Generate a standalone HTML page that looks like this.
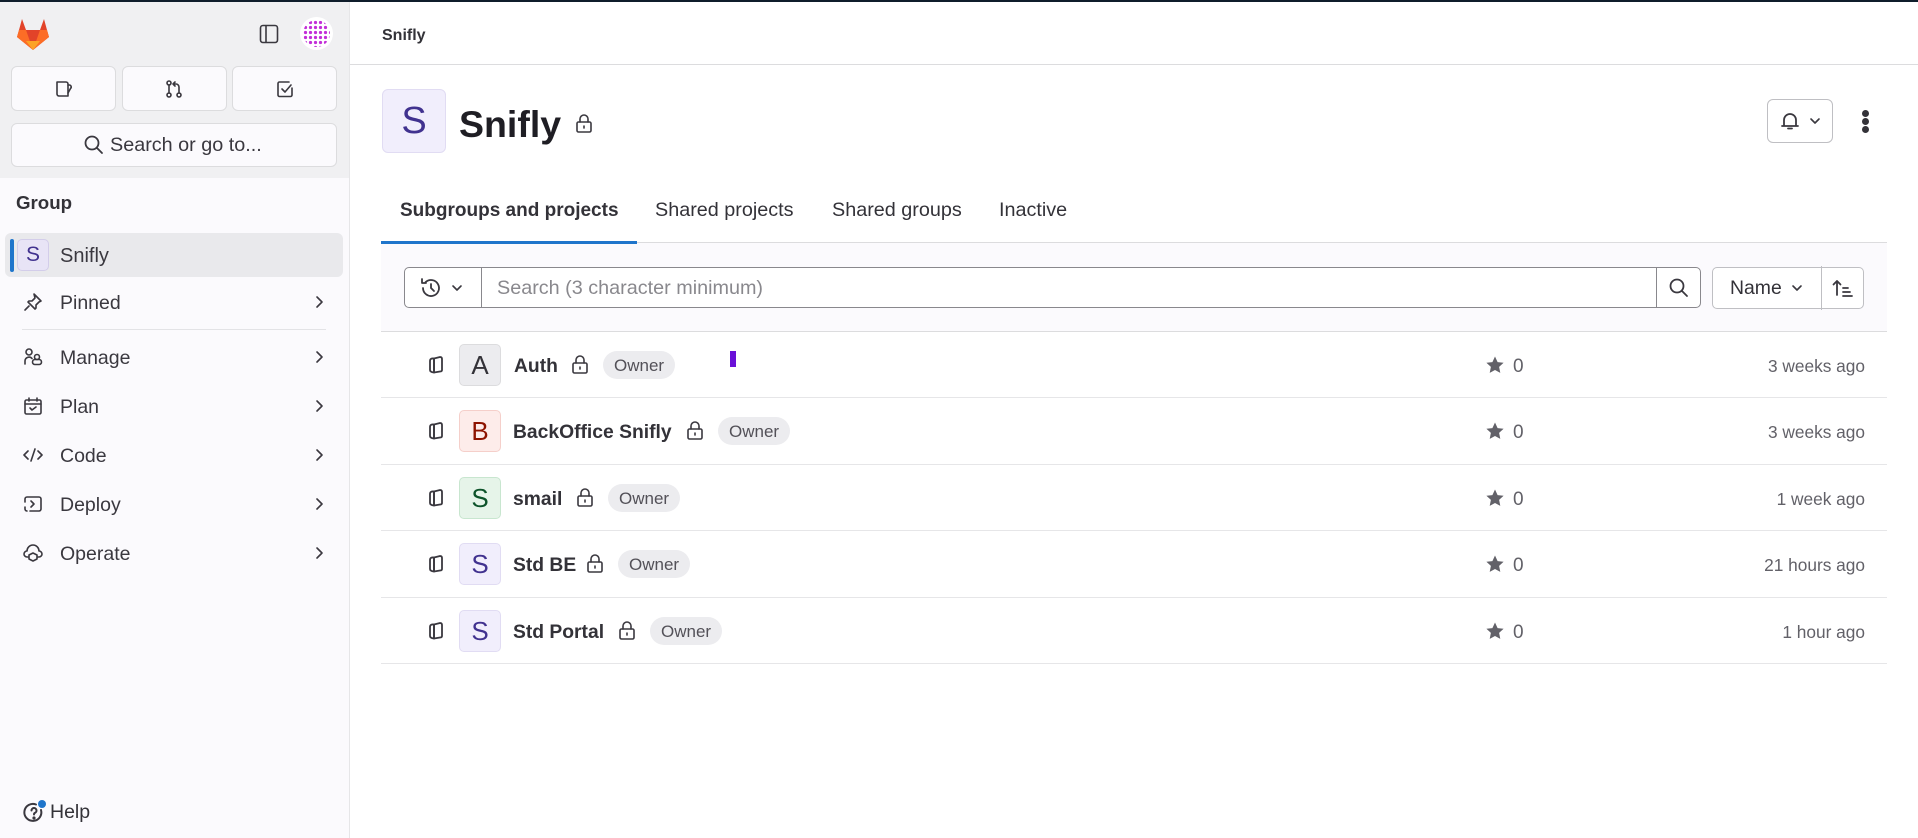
<!DOCTYPE html>
<html><head><meta charset="utf-8"><style>
*{box-sizing:border-box;margin:0;padding:0}
body{width:1918px;height:838px;overflow:hidden;background:#fff;font-family:"Liberation Sans",sans-serif;color:#333238;position:relative}
.a{position:absolute}
.t{position:absolute;white-space:nowrap;line-height:1}
svg{position:absolute;fill:none;stroke:#3a383f;stroke-width:1.6;stroke-linecap:round;stroke-linejoin:round}
.btn{position:absolute;border:1px solid #dcdcde;border-radius:6px;background:#fbfafd}
.nav{font-size:19.5px;color:#3a383f;left:60px}
.row-line{position:absolute;left:381px;width:1506px;height:1px;background:#e6e6e8}
.badge{position:absolute;height:28px;border-radius:14px;background:#ececef;color:#535158;font-size:17px;line-height:29px;padding:0 11px}
.name{font-weight:bold;font-size:19.3px;color:#333238}
.time{font-size:17.3px;color:#626168;right:53px}
.star{font-size:17.3px;color:#626168}
</style></head><body>
<div class="a" style="left:0;top:0;width:1918px;height:2px;background:#0f1d2b"></div>
<div class="a" style="left:0;top:2px;width:349px;height:176px;background:#f0f0f2"></div>
<div class="a" style="left:0;top:178px;width:349px;height:660px;background:#fbfafd"></div>
<div class="a" style="left:349px;top:2px;width:1px;height:836px;background:#e6e6e8"></div>
<svg style="left:15px;top:16px;stroke:none" width="36" height="36" viewBox="0 0 36 36">
<path d="M18 34 L2 21 L4 14 L7 3 L11 14 H25 L29 3 L32 14 L34 21 Z" fill="#e24329"/>
<path d="M18 34 L2 21 L4 14 L11 14 Z" fill="#fc6d26"/>
<path d="M18 34 L34 21 L32 14 L25 14 Z" fill="#fc6d26"/>
<path d="M18 34 L11 25 H25 Z" fill="#fca326"/>
</svg>
<svg style="left:259px;top:24px" width="20" height="20" viewBox="0 0 20 20"><rect x="1.5" y="1.5" width="17" height="17" rx="2.5"/><line x1="7" y1="2" x2="7" y2="18"/></svg>
<div class="a" style="left:300px;top:17px;width:33px;height:33px;border-radius:50%;background:#fff;overflow:hidden">
<div class="a" style="left:3px;top:3px;width:27px;height:27px;border-radius:50%;background:radial-gradient(circle,#c22fd8 1.6px,transparent 1.8px) 0 0/5px 5px;"></div></div>
<div class="btn" style="left:11px;top:66px;width:105px;height:45px"></div>
<div class="btn" style="left:122px;top:66px;width:105px;height:45px"></div>
<div class="btn" style="left:232px;top:66px;width:105px;height:45px"></div>
<svg style="left:54px;top:79px" width="20" height="20" viewBox="0 0 20 20"><path d="M3 3h9a2 2 0 0 1 2 2v12H5a2 2 0 0 1-2-2z"/><path d="M14 6h1.5a2 2 0 0 1 1 3.5L14 14"/></svg>
<svg style="left:164px;top:79px" width="20" height="20" viewBox="0 0 20 20"><circle cx="5" cy="4" r="2"/><circle cx="5" cy="16" r="2"/><circle cx="15" cy="16" r="2"/><line x1="5" y1="6" x2="5" y2="14"/><path d="M15 14V8a3 3 0 0 0-3-3H9M11 3L9 5l2 2"/></svg>
<svg style="left:275px;top:79px" width="20" height="20" viewBox="0 0 20 20"><path d="M17 9v7a1.5 1.5 0 0 1-1.5 1.5h-11A1.5 1.5 0 0 1 3 16V4.5A1.5 1.5 0 0 1 4.5 3H14"/><path d="M7 10l3 3 6-7"/></svg>
<div class="btn" style="left:11px;top:123px;width:326px;height:44px"></div>
<svg style="left:83px;top:134px;stroke-width:1.8" width="22" height="22" viewBox="0 0 22 22"><circle cx="9" cy="9" r="6.5"/><line x1="14" y1="14" x2="19" y2="19"/></svg>
<div class="t" style="left:110px;top:136px;font-size:19.8px;color:#3a383f">Search or go to...</div>
<div class="t" style="left:16px;top:194px;font-size:18.7px;font-weight:bold;color:#333238">Group</div>
<div class="a" style="left:5px;top:233px;width:338px;height:44px;border-radius:6px;background:#e9e9ec"></div>
<div class="a" style="left:10px;top:239px;width:4px;height:33px;border-radius:2px;background:#1f75cb"></div>
<div class="a" style="left:17px;top:239px;width:32px;height:32px;border-radius:5px;background:#e8e4f6;border:1px solid #d3cdea;color:#41328f;font-size:21px;text-align:center;line-height:30px">S</div>
<div class="t nav" style="top:246px;font-size:20px">Snifly</div>
<svg style="left:23px;top:292px" width="20" height="20" viewBox="0 0 20 20"><path d="M11 2l7 7-2 1-3 3 0 3-1 1-7-7 1-1h3l3-3z"/><line x1="6" y1="14" x2="2" y2="18"/></svg>
<div class="t nav" style="top:294px">Pinned</div>
<div class="a" style="left:22px;top:329px;width:304px;height:1px;background:#e3e3e6"></div>
<svg style="left:23px;top:347px" width="20" height="20" viewBox="0 0 20 20"><circle cx="6" cy="5" r="3"/><path d="M2 17v-3a4 4 0 0 1 7-2.5"/><circle cx="14" cy="10" r="2.5"/><rect x="9.5" y="12.5" width="9" height="5" rx="2.5"/></svg>
<div class="t nav" style="top:349px">Manage</div>
<svg style="left:23px;top:396px" width="20" height="20" viewBox="0 0 20 20"><rect x="2" y="4" width="16" height="14" rx="1.5"/><line x1="2" y1="8" x2="18" y2="8"/><line x1="6" y1="2" x2="6" y2="5"/><line x1="14" y1="2" x2="14" y2="5"/><path d="M7 12l2 2 4-3"/></svg>
<div class="t nav" style="top:398px">Plan</div>
<svg style="left:23px;top:445px" width="20" height="20" viewBox="0 0 20 20"><path d="M5 6l-4 4 4 4M15 6l4 4-4 4M12 4l-4 12"/></svg>
<div class="t nav" style="top:447px">Code</div>
<svg style="left:23px;top:494px" width="20" height="20" viewBox="0 0 20 20"><path d="M2 8V5a2 2 0 0 1 2-2h12a2 2 0 0 1 2 2v10a2 2 0 0 1-2 2H7M2 13v2a2 2 0 0 0 2 2"/><path d="M8 7l3 3-3 3"/></svg>
<div class="t nav" style="top:496px">Deploy</div>
<svg style="left:23px;top:543px" width="20" height="20" viewBox="0 0 20 20"><path d="M5 14H4a3 3 0 0 1 0-6 6 6 0 0 1 12 0 3 3 0 0 1 0 6h-1"/><path d="M10 10l4 2v4l-4 2-4-2v-4z"/></svg>
<div class="t nav" style="top:545px">Operate</div>
<svg style="left:314px;top:295px" width="10" height="14" viewBox="0 0 10 14"><path d="M3 2l5 5-5 5"/></svg>
<svg style="left:314px;top:350px" width="10" height="14" viewBox="0 0 10 14"><path d="M3 2l5 5-5 5"/></svg>
<svg style="left:314px;top:399px" width="10" height="14" viewBox="0 0 10 14"><path d="M3 2l5 5-5 5"/></svg>
<svg style="left:314px;top:448px" width="10" height="14" viewBox="0 0 10 14"><path d="M3 2l5 5-5 5"/></svg>
<svg style="left:314px;top:497px" width="10" height="14" viewBox="0 0 10 14"><path d="M3 2l5 5-5 5"/></svg>
<svg style="left:314px;top:546px" width="10" height="14" viewBox="0 0 10 14"><path d="M3 2l5 5-5 5"/></svg>
<svg style="left:22px;top:801px;stroke-width:2" width="24" height="24" viewBox="0 0 24 24"><path d="M19 9a8.5 8.5 0 1 1-5-5.5"/><path d="M9.5 9.5a2.5 2.5 0 1 1 3.5 2.3c-.8.4-1 1-1 1.7"/><circle cx="12" cy="17" r=".6" fill="#3a383f"/></svg>
<div class="a" style="left:38px;top:800px;width:8px;height:8px;border-radius:50%;background:#1f75cb"></div>
<div class="t" style="left:50px;top:803px;font-size:19.5px;color:#333238">Help</div>

<div class="t" style="left:382px;top:28px;font-size:16px;font-weight:bold;color:#333238">Snifly</div>
<div class="a" style="left:350px;top:64px;width:1568px;height:1px;background:#dcdcde"></div>
<div class="a" style="left:382px;top:89px;width:64px;height:64px;border-radius:6px;background:#f1eefc;border:1px solid #e1dcf3;color:#41328f;font-size:38px;text-align:center;line-height:62px">S</div>
<div class="t" style="left:459px;top:106px;font-size:37.5px;font-weight:bold;color:#1f1e24">Snifly</div>
<svg style="left:575px;top:114px" width="18" height="20" viewBox="0 0 18 20"><rect x="2" y="8" width="14" height="10" rx="1.5"/><path d="M5 8V5a4 4 0 0 1 8 0v3"/><line x1="9" y1="12" x2="9" y2="14"/></svg>
<div class="a" style="left:1767px;top:99px;width:66px;height:44px;border:1px solid #bfbfc3;border-radius:6px"></div>
<svg style="left:1780px;top:111px;stroke-width:1.8" width="20" height="20" viewBox="0 0 20 20"><path d="M4 15V9a6 6 0 0 1 12 0v6M2 15h16M8 17.5h4"/></svg>
<svg style="left:1809px;top:116px" width="12" height="10" viewBox="0 0 12 10"><path d="M2 3l4 4 4-4"/></svg>
<div class="a" style="left:1862px;top:110px;width:7px;height:7px;border-radius:50%;background:#333238"></div>
<div class="a" style="left:1862px;top:118px;width:7px;height:7px;border-radius:50%;background:#333238"></div>
<div class="a" style="left:1862px;top:126px;width:7px;height:7px;border-radius:50%;background:#333238"></div>

<div class="t" style="left:400px;top:201px;font-size:19px;font-weight:bold;color:#333238">Subgroups and projects</div>
<div class="t" style="left:655px;top:201px;font-size:19.8px;color:#333238">Shared projects</div>
<div class="t" style="left:832px;top:201px;font-size:19.8px;color:#333238">Shared groups</div>
<div class="t" style="left:999px;top:201px;font-size:19.8px;color:#333238">Inactive</div>
<div class="a" style="left:381px;top:242px;width:1506px;height:90px;background:#fbfafd;border-top:1px solid #dcdcde;border-bottom:1px solid #dcdcde"></div>
<div class="a" style="left:381px;top:241px;width:256px;height:3px;background:#1f75cb"></div>
<div class="a" style="left:404px;top:267px;width:1297px;height:41px;border:1px solid #89888d;border-radius:5px;background:#fff"></div>
<div class="a" style="left:481px;top:267px;width:1px;height:41px;background:#89888d"></div>
<div class="a" style="left:1656px;top:267px;width:1px;height:41px;background:#89888d"></div>
<svg style="left:419px;top:276px;stroke-width:1.8" width="24" height="24" viewBox="0 0 24 24"><path d="M4 12a8 8 0 1 0 2.5-5.8M3 3v4h4"/><path d="M12 8v4l3 3"/></svg>
<svg style="left:451px;top:283px" width="12" height="10" viewBox="0 0 12 10"><path d="M2 3l4 4 4-4"/></svg>
<div class="t" style="left:497px;top:279px;font-size:19.8px;color:#89888d">Search (3 character minimum)</div>
<svg style="left:1668px;top:277px;stroke-width:1.8" width="22" height="22" viewBox="0 0 22 22"><circle cx="9" cy="9" r="6.5"/><line x1="14" y1="14" x2="19" y2="19"/></svg>
<div class="a" style="left:1712px;top:267px;width:152px;height:42px;border:1px solid #bfbfc3;border-radius:5px;background:#fff"></div>
<div class="a" style="left:1821px;top:266px;width:1px;height:44px;background:#bfbfc3"></div>
<div class="t" style="left:1730px;top:279px;font-size:19.4px;color:#333238">Name</div>
<svg style="left:1791px;top:283px" width="12" height="10" viewBox="0 0 12 10"><path d="M2 3l4 4 4-4"/></svg>
<svg style="left:1831px;top:276px;stroke-width:1.8" width="24" height="24" viewBox="0 0 24 24"><path d="M6 19V5M2.5 8.5L6 5l3.5 3.5M12 12h5M12 16h7M12 20h9"/></svg>

<div class="row-line" style="top:397px"></div>
<div class="row-line" style="top:464px"></div>
<div class="row-line" style="top:530px"></div>
<div class="row-line" style="top:597px"></div>
<div class="row-line" style="top:663px"></div>

<div class="a" style="left:730px;top:351px;width:6px;height:16px;background:#6a10d8"></div>

<svg style="left:426px;top:355px;stroke-width:1.8" width="20" height="20" viewBox="0 0 20 20"><path d="M8 3.5Q4 3 4 6v9q0 2 4 2.5z"/><path d="M8 3.5l6-1.5q2 0 2 2v11q0 1.5-2 1.5l-6 1z"/></svg>
<div class="a" style="left:459px;top:344px;width:42px;height:42px;border-radius:5px;background:#ececef;border:1px solid #dcdcde;color:#333238;font-size:26px;text-align:center;line-height:40px">A</div>
<div class="t name" style="left:514px;top:357px">Auth</div>
<svg style="left:571px;top:355px" width="18" height="20" viewBox="0 0 18 20"><rect x="2" y="8" width="14" height="10" rx="1.5"/><path d="M5 8V5a4 4 0 0 1 8 0v3"/><line x1="9" y1="12" x2="9" y2="14"/></svg>
<div class="badge" style="left:603px;top:351px">Owner</div>
<svg style="left:1485px;top:355px;fill:#626168;stroke:none" width="20" height="20" viewBox="0 0 20 20"><path d="M10 1.5l2.6 5.6 6 .7-4.5 4.1 1.2 6L10 15l-5.3 2.9 1.2-6L1.4 7.8l6-.7z"/></svg>
<div class="t star" style="left:1513px;top:357px;font-size:19px">0</div>
<div class="t time" style="top:358px">3 weeks ago</div>

<svg style="left:426px;top:421px;stroke-width:1.8" width="20" height="20" viewBox="0 0 20 20"><path d="M8 3.5Q4 3 4 6v9q0 2 4 2.5z"/><path d="M8 3.5l6-1.5q2 0 2 2v11q0 1.5-2 1.5l-6 1z"/></svg>
<div class="a" style="left:459px;top:410px;width:42px;height:42px;border-radius:5px;background:#fdecea;border:1px solid #f5cfca;color:#8d1300;font-size:26px;text-align:center;line-height:40px">B</div>
<div class="t name" style="left:513px;top:423px">BackOffice Snifly</div>
<svg style="left:686px;top:421px" width="18" height="20" viewBox="0 0 18 20"><rect x="2" y="8" width="14" height="10" rx="1.5"/><path d="M5 8V5a4 4 0 0 1 8 0v3"/><line x1="9" y1="12" x2="9" y2="14"/></svg>
<div class="badge" style="left:718px;top:417px">Owner</div>
<svg style="left:1485px;top:421px;fill:#626168;stroke:none" width="20" height="20" viewBox="0 0 20 20"><path d="M10 1.5l2.6 5.6 6 .7-4.5 4.1 1.2 6L10 15l-5.3 2.9 1.2-6L1.4 7.8l6-.7z"/></svg>
<div class="t star" style="left:1513px;top:423px;font-size:19px">0</div>
<div class="t time" style="top:424px">3 weeks ago</div>

<svg style="left:426px;top:488px;stroke-width:1.8" width="20" height="20" viewBox="0 0 20 20"><path d="M8 3.5Q4 3 4 6v9q0 2 4 2.5z"/><path d="M8 3.5l6-1.5q2 0 2 2v11q0 1.5-2 1.5l-6 1z"/></svg>
<div class="a" style="left:459px;top:477px;width:42px;height:42px;border-radius:5px;background:#e6f4e9;border:1px solid #c8e6cf;color:#0d532a;font-size:26px;text-align:center;line-height:40px">S</div>
<div class="t name" style="left:513px;top:490px">smail</div>
<svg style="left:576px;top:488px" width="18" height="20" viewBox="0 0 18 20"><rect x="2" y="8" width="14" height="10" rx="1.5"/><path d="M5 8V5a4 4 0 0 1 8 0v3"/><line x1="9" y1="12" x2="9" y2="14"/></svg>
<div class="badge" style="left:608px;top:484px">Owner</div>
<svg style="left:1485px;top:488px;fill:#626168;stroke:none" width="20" height="20" viewBox="0 0 20 20"><path d="M10 1.5l2.6 5.6 6 .7-4.5 4.1 1.2 6L10 15l-5.3 2.9 1.2-6L1.4 7.8l6-.7z"/></svg>
<div class="t star" style="left:1513px;top:490px;font-size:19px">0</div>
<div class="t time" style="top:491px">1 week ago</div>

<svg style="left:426px;top:554px;stroke-width:1.8" width="20" height="20" viewBox="0 0 20 20"><path d="M8 3.5Q4 3 4 6v9q0 2 4 2.5z"/><path d="M8 3.5l6-1.5q2 0 2 2v11q0 1.5-2 1.5l-6 1z"/></svg>
<div class="a" style="left:459px;top:543px;width:42px;height:42px;border-radius:5px;background:#f1eefc;border:1px solid #e1dcf3;color:#41328f;font-size:26px;text-align:center;line-height:40px">S</div>
<div class="t name" style="left:513px;top:556px">Std BE</div>
<svg style="left:586px;top:554px" width="18" height="20" viewBox="0 0 18 20"><rect x="2" y="8" width="14" height="10" rx="1.5"/><path d="M5 8V5a4 4 0 0 1 8 0v3"/><line x1="9" y1="12" x2="9" y2="14"/></svg>
<div class="badge" style="left:618px;top:550px">Owner</div>
<svg style="left:1485px;top:554px;fill:#626168;stroke:none" width="20" height="20" viewBox="0 0 20 20"><path d="M10 1.5l2.6 5.6 6 .7-4.5 4.1 1.2 6L10 15l-5.3 2.9 1.2-6L1.4 7.8l6-.7z"/></svg>
<div class="t star" style="left:1513px;top:556px;font-size:19px">0</div>
<div class="t time" style="top:557px">21 hours ago</div>

<svg style="left:426px;top:621px;stroke-width:1.8" width="20" height="20" viewBox="0 0 20 20"><path d="M8 3.5Q4 3 4 6v9q0 2 4 2.5z"/><path d="M8 3.5l6-1.5q2 0 2 2v11q0 1.5-2 1.5l-6 1z"/></svg>
<div class="a" style="left:459px;top:610px;width:42px;height:42px;border-radius:5px;background:#f1eefc;border:1px solid #e1dcf3;color:#41328f;font-size:26px;text-align:center;line-height:40px">S</div>
<div class="t name" style="left:513px;top:623px">Std Portal</div>
<svg style="left:618px;top:621px" width="18" height="20" viewBox="0 0 18 20"><rect x="2" y="8" width="14" height="10" rx="1.5"/><path d="M5 8V5a4 4 0 0 1 8 0v3"/><line x1="9" y1="12" x2="9" y2="14"/></svg>
<div class="badge" style="left:650px;top:617px">Owner</div>
<svg style="left:1485px;top:621px;fill:#626168;stroke:none" width="20" height="20" viewBox="0 0 20 20"><path d="M10 1.5l2.6 5.6 6 .7-4.5 4.1 1.2 6L10 15l-5.3 2.9 1.2-6L1.4 7.8l6-.7z"/></svg>
<div class="t star" style="left:1513px;top:623px;font-size:19px">0</div>
<div class="t time" style="top:624px">1 hour ago</div>
</body></html>
